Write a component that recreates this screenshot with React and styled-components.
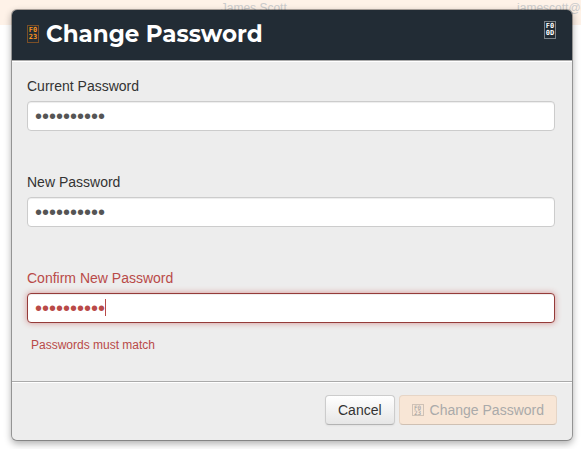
import React from "react";
import styled, { createGlobalStyle, css } from "styled-components";

const GlobalStyle = createGlobalStyle`
  *, *::before, *::after { box-sizing: border-box; }
  body {
    margin: 0;
    background: #fff;
    color: #333;
    font: 14px/20px "Liberation Sans", Arial, sans-serif;
    overflow: hidden;
  }
`;

const Page = styled.div`
  position: relative;
  min-height: 100vh;
`;

const UserTable = styled.table`
  width: 100%;
  table-layout: fixed;
  border-collapse: collapse;
  background: #fef2e8;
  color: #ccc;
  font-size: 12px;
  line-height: 16px;
`;

const UserCell = styled.td`
  width: ${({ $width }) => $width};
  height: 25px;
  padding: 0;
  vertical-align: top;
  white-space: nowrap;
`;

const Overlay = styled.div`
  position: absolute;
  inset: 0;
  padding: 9px 8px 8px 11px;
`;

const Dialog = styled.section`
  background: #ededed;
  background-clip: padding-box;
  border: 1px solid rgba(0, 0, 0, 0.3);
  border-radius: 6px;
  box-shadow: 0 3px 7px rgba(0, 0, 0, 0.3);
`;

const Header = styled.header`
  display: flex;
  justify-content: space-between;
  align-items: flex-start;
  height: 51px;
  padding: 9px 16px 0 15px;
  background: #222c35;
  border-bottom: 1px solid #aaa;
  border-radius: 5px 5px 0 0;
`;

const Title = styled.h1`
  display: flex;
  align-items: center;
  gap: 7px;
  margin: 0;
  color: #fff;
  font: 700 23px/30px Montserrat, Inter, sans-serif;
`;

const CodeBox = styled.span`
  display: inline-flex;
  align-items: center;
  justify-content: center;
  width: 12px;
  height: ${({ $compact }) => ($compact ? "12px" : "18px")};
  border: 1px solid ${({ $line }) => $line};
  color: ${({ $ink }) => $ink};
  font: ${({ $compact }) => ($compact ? "400 6px/5px" : "700 7px/7px")} "DejaVu Sans Mono", monospace;
  white-space: pre;
`;

const CloseButton = styled.button`
  display: flex;
  margin: 2px 0 0;
  padding: 0;
  border: 0;
  background: none;
  cursor: pointer;
`;

const Body = styled.div`
  display: grid;
  gap: 41px;
  padding: 14px 17px 26px 15px;
  border-top: 1px solid #fff;
`;

const Field = styled.div`
  display: flex;
  flex-direction: column;
`;

const Label = styled.label`
  margin-bottom: 5px;
  color: ${({ $error }) => ($error ? "#b94a48" : "#333")};
`;

const InputWrap = styled.div`
  position: relative;
  display: flex;
`;

const PasswordInput = styled.input`
  width: 100%;
  height: 30px;
  padding: 4px 7px;
  border: 1px solid #ccc;
  border-radius: 4px;
  outline: 0;
  background: #fff;
  box-shadow: inset 0 1px 1px rgba(0, 0, 0, 0.075);
  color: #555;
  font: 20px/20px "Liberation Sans", Arial, sans-serif;
  ${({ $error }) =>
    $error &&
    css`
      border-color: #953b39;
      box-shadow: inset 0 1px 1px rgba(0, 0, 0, 0.075), 0 0 6px #d59392;
      color: #b94a48;
    `}
`;

const Caret = styled.span`
  position: absolute;
  top: 6px;
  left: 78px;
  width: 1px;
  height: 17px;
  background: #b94a48;
`;

const Help = styled.p`
  margin: 12px 0 0;
  padding-left: 4px;
  color: #b94a48;
  font-size: 12px;
`;

const Footer = styled.footer`
  display: flex;
  justify-content: flex-end;
  gap: 4px;
  padding: 13px 15px 15px;
  border-top: 1px solid #aaa;
  border-radius: 0 0 5px 5px;
  box-shadow: inset 0 1px 0 #fff;
`;

const Button = styled.button`
  display: flex;
  align-items: center;
  gap: 6px;
  height: 30px;
  padding: 4px 12px;
  border: 1px solid #ccc;
  border-bottom-color: #b3b3b3;
  border-radius: 4px;
  background: linear-gradient(#fff, #e6e6e6);
  box-shadow: 0 1px 2px rgba(0, 0, 0, 0.05);
  color: #333;
  font: 14px/20px "Liberation Sans", Arial, sans-serif;
  white-space: nowrap;
  ${({ $primary }) =>
    $primary &&
    css`
      border-color: #e6d5c6 #e6d5c6 #cfc0b3;
      background: #f8e6d6;
      box-shadow: none;
      color: #aaa;
    `}
`;

function CodeIcon({ code, ...look }) {
  return (
    <CodeBox aria-hidden="true" {...look}>
      {`${code.slice(0, 2)}\n${code.slice(2)}`}
    </CodeBox>
  );
}

function PasswordField({ id, label, error }) {
  return (
    <Field>
      <Label htmlFor={id} $error={Boolean(error)}>{label}</Label>
      <InputWrap>
        <PasswordInput
          id={id}
          type="password"
          defaultValue="password12"
          $error={Boolean(error)}
          aria-invalid={Boolean(error)}
          aria-describedby={error ? `${id}-help` : undefined}
        />
        {error && <Caret />}
      </InputWrap>
      {error && <Help id={`${id}-help`}>{error}</Help>}
    </Field>
  );
}

export default function App() {
  return (
    <Page>
      <GlobalStyle />
      <UserTable>
        <tbody>
          <tr>
            <UserCell $width="38%" />
            <UserCell $width="51%">James Scott</UserCell>
            <UserCell $width="11%">jamescott@g</UserCell>
          </tr>
        </tbody>
      </UserTable>
      <Overlay>
        <Dialog role="dialog" aria-labelledby="dialog-title">
          <Header>
            <Title id="dialog-title">
              <CodeIcon code="F023" $line="#7b4f27" $ink="#f7931e" />
              Change Password
            </Title>
            <CloseButton type="button" aria-label="Close">
              <CodeIcon code="F00D" $line="#7c8389" $ink="#fff" />
            </CloseButton>
          </Header>
          <Body>
            <PasswordField id="current" label="Current Password" />
            <PasswordField id="new" label="New Password" />
            <PasswordField id="confirm" label="Confirm New Password" error="Passwords must match" />
          </Body>
          <Footer>
            <Button type="button">Cancel</Button>
            <Button type="submit" disabled $primary>
              <CodeIcon code="F023" $compact $line="#cfc2b6" $ink="#999" />
              Change Password
            </Button>
          </Footer>
        </Dialog>
      </Overlay>
    </Page>
  );
}
